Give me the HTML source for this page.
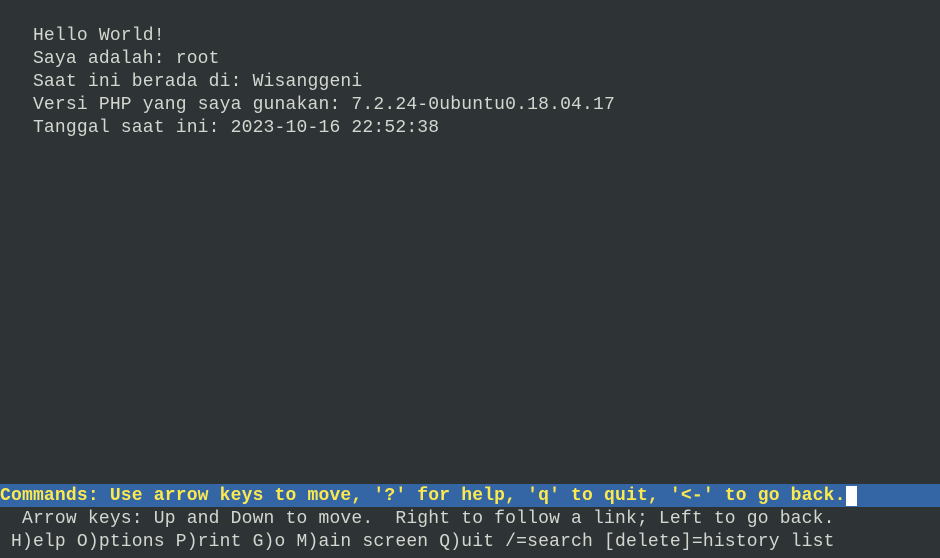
<!DOCTYPE html>
<html><head><meta charset="utf-8"><style>
html,body{margin:0;padding:0;background:#2e3436;width:940px;height:558px;overflow:hidden}
.l{position:absolute;left:0;height:23px;line-height:25px;font-family:"Liberation Mono","Courier New",monospace;font-size:18px;letter-spacing:0.18px;color:#d3d7cf;white-space:pre}
.bar{background:#3465a4;width:940px;color:#fce94f;font-weight:bold}
.cur{background:#fff;color:#fff}
</style></head><body>
<div class="l" style="top:24px">   Hello World!</div>
<div class="l" style="top:47px">   Saya adalah: root</div>
<div class="l" style="top:70px">   Saat ini berada di: Wisanggeni</div>
<div class="l" style="top:93px">   Versi PHP yang saya gunakan: 7.2.24-0ubuntu0.18.04.17</div>
<div class="l" style="top:116px">   Tanggal saat ini: 2023-10-16 22:52:38</div>
<div class="l bar" style="top:484px">Commands: Use arrow keys to move, '?' for help, 'q' to quit, '&lt;-' to go back.<span class="cur"> </span></div>
<div class="l" style="top:507px">  Arrow keys: Up and Down to move.  Right to follow a link; Left to go back.</div>
<div class="l" style="top:530px"> H)elp O)ptions P)rint G)o M)ain screen Q)uit /=search [delete]=history list</div>
</body></html>
